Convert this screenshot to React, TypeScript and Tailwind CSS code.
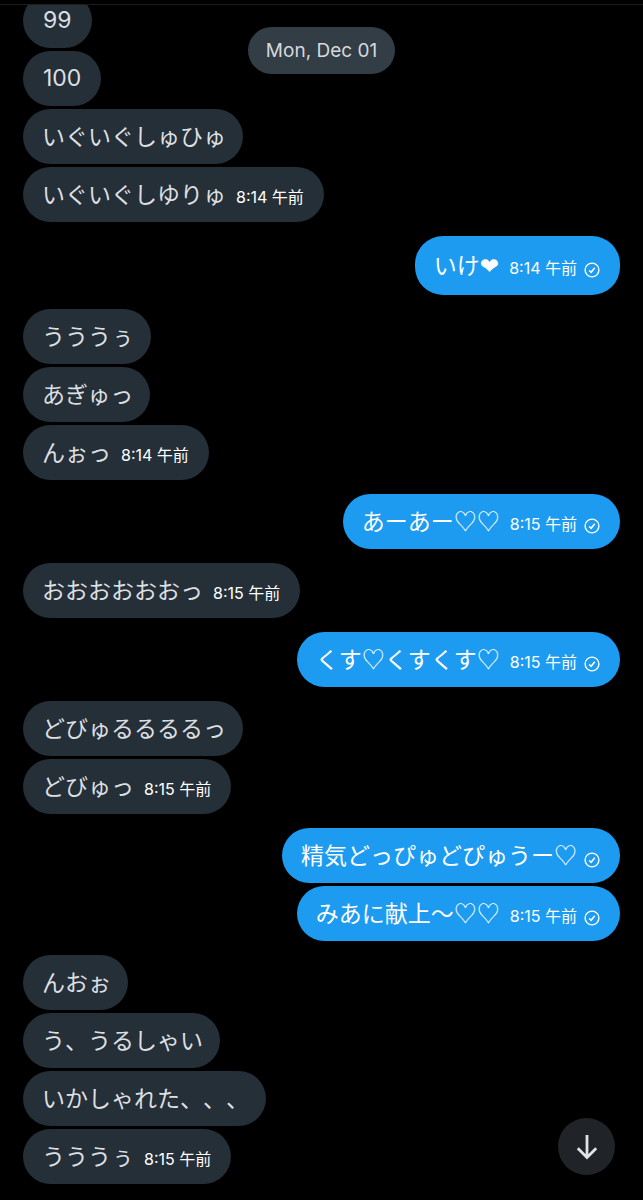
interface Message {
    text: string;
    time?: string;
    latin?: boolean;
    tall?: boolean;
}

interface MessageGroup {
    sent: boolean;
    messages: Message[];
}

const groups: MessageGroup[] = [
    {
        sent: false,
        messages: [
            { text: "99", latin: true },
            { text: "100", latin: true },
            { text: "いぐいぐしゅひゅ" },
            { text: "いぐいぐしゆりゅ", time: "8:14 午前" },
        ],
    },
    { sent: true, messages: [{ text: "いけ❤\uFE0E", time: "8:14 午前", tall: true }] },
    {
        sent: false,
        messages: [
            { text: "うううぅ" },
            { text: "あぎゅっ" },
            { text: "んぉっ", time: "8:14 午前" },
        ],
    },
    { sent: true, messages: [{ text: "あーあー♡♡", time: "8:15 午前" }] },
    { sent: false, messages: [{ text: "おおおおおおっ", time: "8:15 午前" }] },
    { sent: true, messages: [{ text: "くす♡くすくす♡", time: "8:15 午前" }] },
    {
        sent: false,
        messages: [
            { text: "どびゅるるるるっ" },
            { text: "どびゅっ", time: "8:15 午前" },
        ],
    },
    {
        sent: true,
        messages: [
            { text: "精気どっぴゅどぴゅうー♡" },
            { text: "みあに献上〜♡♡", time: "8:15 午前" },
        ],
    },
    {
        sent: false,
        messages: [
            { text: "んおぉ" },
            { text: "う、うるしゃい" },
            { text: "いかしゃれた、、、" },
            { text: "うううぅ", time: "8:15 午前" },
        ],
    },
];

function SentIcon() {
    return (
        <svg viewBox="0 0 16 16" className="mt-2 ml-[7px] size-4 shrink-0" fill="none" stroke="currentColor" role="img" aria-label="Sent">
            <circle cx="8" cy="8" r="6.9" strokeWidth="1.4" />
            <path d="M5.2 8.4l1.9 1.9 3.7-4.6" strokeWidth="1.5" />
        </svg>
    );
}

function Bubble({ message, sent }: { message: Message; sent: boolean }) {
    const { text, time, latin, tall } = message;

    return (
        <li
            className={`flex items-center rounded-[28px] ${tall ? "h-[59px]" : "h-[55px]"} ${latin ? "pl-5" : "pl-[19px]"} ${time || sent || latin ? "pr-5" : "pr-[17px]"} ${sent
                ? "bg-[#1d9bf0] text-white"
                : "bg-[#252f37] text-[#dcdfe2]"
                }`}
        >
            <div className={`flex items-baseline gap-[10px] ${latin ? "pb-px" : "pb-1"}`}>
                <span
                    className={`text-[23px] leading-7 whitespace-nowrap [text-spacing-trim:space-all] ${latin
                        ? "font-[Inter,sans-serif]"
                        : "font-['Noto_Sans_CJK_JP','DejaVu_Sans',sans-serif]"
                        }`}
                >
                    {text}
                </span>
                {time && <time className="text-[16px] leading-5 text-white whitespace-nowrap">{time}</time>}
            </div>
            {sent && <SentIcon />}
        </li>
    );
}

export default function App() {
    return (
        <div lang="ja" className="relative min-h-screen overflow-hidden bg-black font-[Inter,'Noto_Sans_CJK_JP',sans-serif]">
            {/* Header edge */}
            <div className="h-[5px] border-b border-[#1a1c1f]" />

            {/* Date */}
            <div className="absolute inset-x-0 top-[27px] flex justify-center">
                <span className="rounded-full bg-[#333d45] px-[18px] text-[19px] leading-[47px] text-[#d5d9dc]">Mon, Dec 01</span>
            </div>

            {/* Conversation */}
            <main className="overflow-hidden px-[23px] pb-3">
                <div className="-mt-3 flex flex-col gap-[14px]">
                    {groups.map((group, i) => (
                        <ul key={i} className={`flex flex-col gap-[3px] ${group.sent ? "items-end" : "items-start"}`}>
                            {group.messages.map((message, j) => (
                                <Bubble key={j} message={message} sent={group.sent} />
                            ))}
                        </ul>
                    ))}
                </div>
            </main>

            <button aria-label="Scroll to bottom" className="fixed right-7 bottom-[25px] flex size-[57px] items-center justify-center rounded-full bg-[#202327] text-[#e1e3e5]">
                <svg viewBox="0 0 24 26" className="h-[26px] w-6" fill="none" stroke="currentColor" strokeWidth="2.8">
                    <path d="M12 1v22.5M2.8 14.3L12 23.5l9.2-9.2" />
                </svg>
            </button>
        </div>
    );
}
